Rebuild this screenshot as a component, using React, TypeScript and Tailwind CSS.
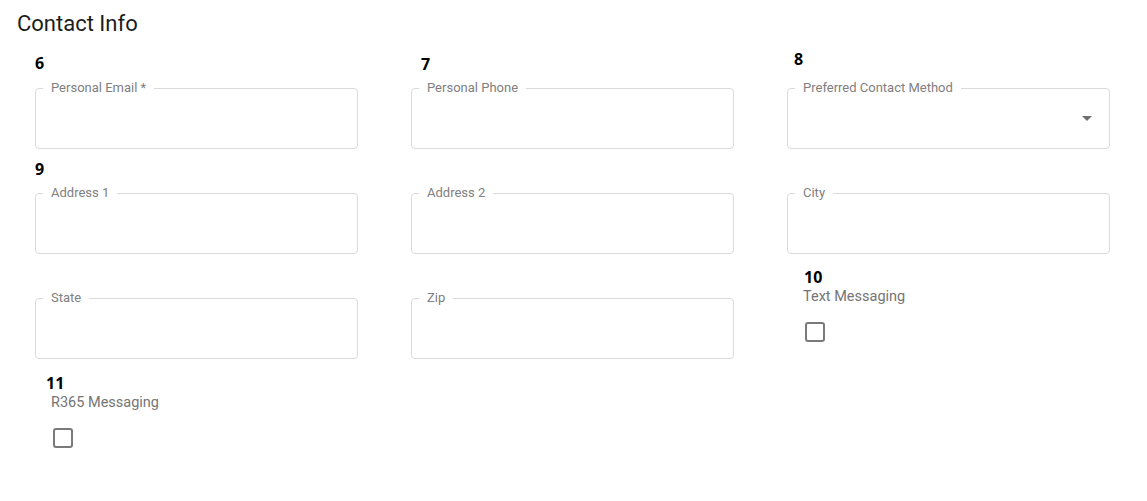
import React from "react";

type FieldProps = {
  label: string;
  select?: boolean;
};

const OutlinedField = ({ label, select }: FieldProps) => {
  return (
    <div className="relative h-[61px] w-full rounded-[4px] border border-[#dadada] flex items-center justify-end pr-[17px]">
      <span className="absolute -top-[9px] left-[7px] bg-white px-2 text-[13px] leading-4 text-[#808080] font-['Roboto',sans-serif] whitespace-nowrap">
        {label}
      </span>
      {select && (
        <svg width="10" height="5" viewBox="0 0 10 5" className="mt-[-1px]">
          <polygon points="0,0 10,0 5,5" fill="#6e6e6e" />
        </svg>
      )}
    </div>
  );
};

const Num = ({ n, className }: { n: string; className: string }) => (
  <div
    className={`font-['Open_Sans',sans-serif] font-bold text-[16px] leading-5 text-black ${className}`}
  >
    {n}
  </div>
);

const CheckField = ({ label }: { label: string }) => (
  <>
    <div className="ml-[16px] text-[14.5px] leading-5 text-[#757575] font-['Roboto',sans-serif]">
      {label}
    </div>
    <div className="ml-[18px] mt-[15px] h-[20px] w-[20px] rounded-[3px] border-2 border-[#7a7a7a]" />
  </>
);

const App = () => {
  return (
    <div className="w-[1147px] h-[501px] bg-white font-['Roboto',sans-serif]">
      <h1 className="pl-[17px] pt-[10px] text-[22px] leading-7 text-[#1c1c1c]">
        Contact Info
      </h1>

      <div className="mt-[6px] pl-[35px] grid grid-cols-[323px_323px_323px] gap-x-[53px]">
        {/* row 1 */}
        <div className="h-[105px] flex flex-col justify-end">
          <Num n="6" className="mb-[15px]" />
          <OutlinedField label="Personal Email *" />
        </div>
        <div className="h-[105px] flex flex-col justify-end">
          <Num n="7" className="ml-[10px] mb-[14px]" />
          <OutlinedField label="Personal Phone" />
        </div>
        <div className="h-[105px] flex flex-col justify-end">
          <Num n="8" className="ml-[7px] mb-[19px]" />
          <OutlinedField label="Preferred Contact Method" select />
        </div>

        {/* row 2 */}
        <div className="h-[105px] flex flex-col justify-end">
          <Num n="9" className="mb-[14px]" />
          <OutlinedField label="Address 1" />
        </div>
        <div className="h-[105px] flex flex-col justify-end">
          <OutlinedField label="Address 2" />
        </div>
        <div className="h-[105px] flex flex-col justify-end">
          <OutlinedField label="City" />
        </div>

        {/* row 3 */}
        <div className="h-[105px] flex flex-col justify-end">
          <OutlinedField label="State" />
        </div>
        <div className="h-[105px] flex flex-col justify-end">
          <OutlinedField label="Zip" />
        </div>
        <div className="h-[105px] flex flex-col pt-[13px]">
          <Num n="10" className="ml-[17px]" />
          <CheckField label="Text Messaging" />
        </div>

        {/* row 4 */}
        <div className="h-[105px] flex flex-col pt-[14px]">
          <Num n="11" className="ml-[11px]" />
          <CheckField label="R365 Messaging" />
        </div>
      </div>
    </div>
  );
};

export default App;
